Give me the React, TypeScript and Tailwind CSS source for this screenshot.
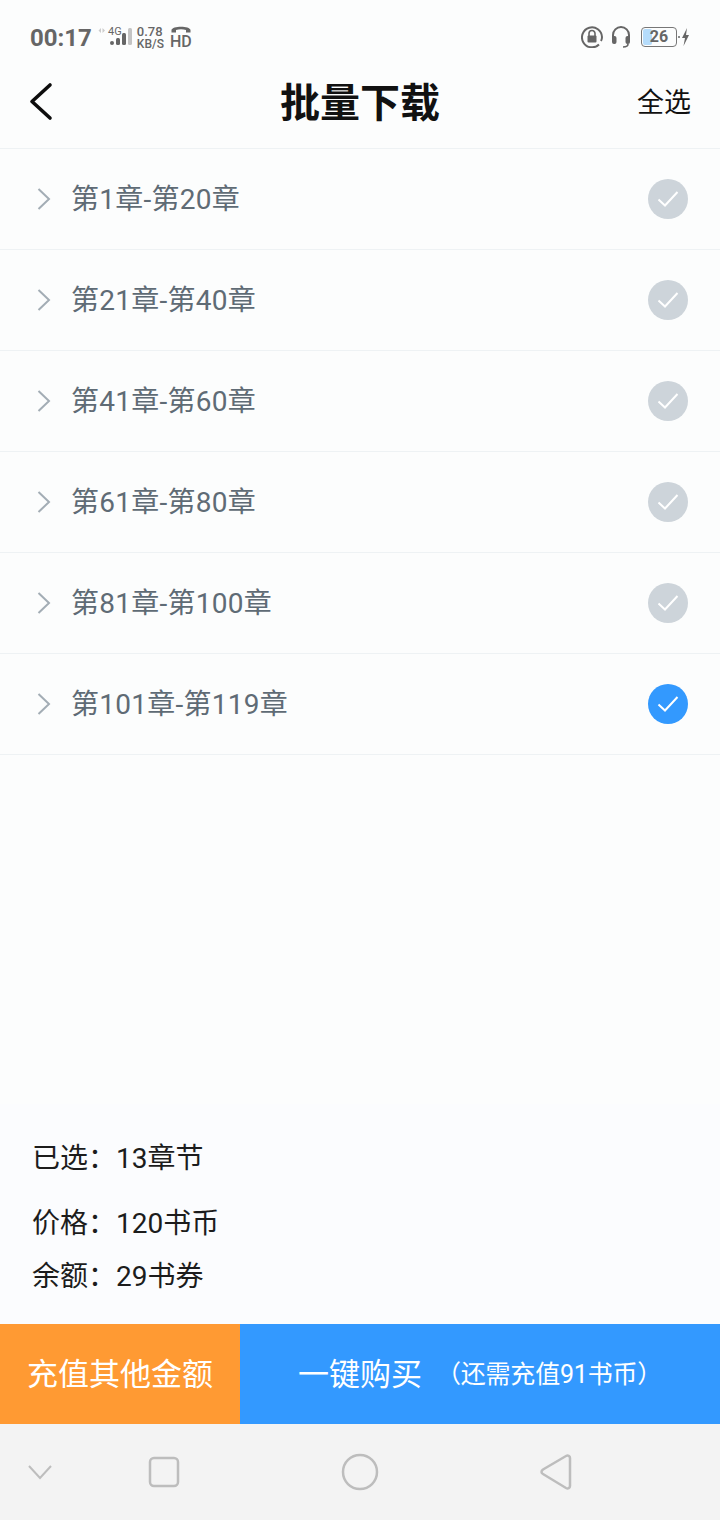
const FONT = "font-['Roboto','Noto_Sans_CJK_SC',sans-serif]"

const chapters = [
  { label: "第1章-第20章", on: false },
  { label: "第21章-第40章", on: false },
  { label: "第41章-第60章", on: false },
  { label: "第61章-第80章", on: false },
  { label: "第81章-第100章", on: false },
  { label: "第101章-第119章", on: true },
]

function StatusBar() {
  return (
    <div className="h-[70px] flex items-start justify-between pt-[23px] pl-[30px] pr-[30px] text-[#666666]">
      <div className="flex items-center h-[30px]">
        <span className="text-[24px] leading-[30px] font-bold">00:17</span>
        <svg width="44" height="26" viewBox="0 0 44 26" className="ml-[5px]">
          <path d="M4 3L1.500 5.500L4 8zM5.500 3L8 5.500L5.500 8z" fill="#cccccc" />
          <text x="11" y="10" fontSize="11" fill="#666" fontFamily="Roboto">4G</text>
          <circle cx="15" cy="18" r="2" fill="#666" />
          <rect x="19" y="13" width="4" height="7" rx="1.500" fill="#666" />
          <rect x="25" y="8" width="4" height="12" rx="1.500" fill="#666" />
          <rect x="31" y="3" width="4" height="17" rx="1.500" fill="#c4c4c4" />
        </svg>
        <div className="flex flex-col items-start ml-[-4px] text-[13px] leading-[13px] font-medium">
          <span>0.78</span>
          <span className="text-[12px]">KB/S</span>
        </div>
        <div className="flex flex-col items-center ml-[6px] mt-[-2px]">
          <svg width="20" height="8" viewBox="0 0 20 8">
            <path d="M0.500 7.500V5C1 0.500 19 0.500 19.500 5V7.500H15V5Q10 3.500 5 5V7.500z" fill="#666" />
          </svg>
          <span className="text-[16px] leading-[14px] font-medium mt-[2px]">HD</span>
        </div>
      </div>
      <div className="flex items-center h-[30px] mt-[-1px]">
        <svg width="22" height="22" viewBox="0 0 22 22" fill="none">
          <path d="M18 18.500A10 10 0 1 1 21 11c0 1.500-.3 2.800-1 4" stroke="#666" strokeWidth="2" />
          <rect x="6.500" y="9.500" width="9" height="7" rx="1" fill="#666" />
          <path d="M8 10V7.500a3 3 0 0 1 6 0V10" stroke="#666" strokeWidth="1.600" />
        </svg>
        <svg width="20" height="22" viewBox="0 0 20 22" fill="none" className="ml-[8px]">
          <path d="M2 13V9a8 8 0 0 1 16 0v4" stroke="#666" strokeWidth="2" />
          <rect x="1" y="10" width="4.500" height="8" rx="2" fill="#666" />
          <rect x="14.500" y="10" width="4.500" height="8" rx="2" fill="#666" />
          <path d="M17 18c0 2-2 3-5 3" stroke="#666" strokeWidth="1.600" />
        </svg>
        <div className="relative ml-[10px] w-[36px] h-[20px] border border-[#777777] rounded-[4px] overflow-hidden flex items-center justify-center">
          <div className="absolute left-[1px] top-[1px] bottom-[1px] w-[9px] bg-[#b5dcfb] rounded-[2px]" />
          <span className="relative text-[16px] leading-[18px] font-bold">26</span>
        </div>
        <svg width="12" height="20" viewBox="0 0 12 20" className="ml-[1px]">
          <circle cx="1" cy="10" r="1" fill="#666" />
          <path d="M9 1L4 11h3l-1.500 8L11 8H8z" fill="#666" />
        </svg>
      </div>
    </div>
  )
}

function Check({ on }: { on: boolean }) {
  return (
    <div className={`w-10 h-10 rounded-full flex items-center justify-center ${on ? "bg-[#3399fe]" : "bg-[#cdd4da]"}`}>
      <svg width="24" height="20" viewBox="0 0 24 20" fill="none">
        <path d="M2.500 10.500L9 16.500L21.500 3" stroke="white" strokeWidth="2" />
      </svg>
    </div>
  )
}

export default function App() {
  return (
    <div className={`w-[720px] h-[1520px] flex flex-col bg-[#fcfdfd] ${FONT}`}>
      <StatusBar />
      <div className="h-[79px] relative flex items-center justify-center border-b border-[#eef2f4]">
        <svg width="28" height="40" viewBox="0 0 28 40" fill="none" className="absolute left-[28px] top-[12px]">
          <path d="M22 3L4 19.500L22 36" stroke="#0d0d0d" strokeWidth="3.600" strokeLinecap="round" strokeLinejoin="round" />
        </svg>
        <h1 className="text-[40px] leading-[50px] font-bold text-[#111111] mt-[-10px]">批量下载</h1>
        <span className="absolute right-[29px] top-[15px] text-[27px] leading-[36px] text-[#111111]">全选</span>
      </div>
      <div className="flex flex-col">
        {chapters.map(item => (
          <div key={item.label} className="h-[101px] flex items-center pl-[36px] pr-[32px] border-b border-[#eef2f4]">
            <svg width="16" height="24" viewBox="0 0 16 24" fill="none" className="shrink-0">
              <path d="M2.500 2L13 12L2.500 22" stroke="#a3adb5" strokeWidth="2" />
            </svg>
            <span className="ml-[19px] flex-1 text-[28px] tracking-[0.25px] leading-[36px] text-[#5f6b75] mt-[1px]">{item.label}</span>
            <Check on={item.on} />
          </div>
        ))}
      </div>
      <div className="flex-1" />
      <div className="h-[220px] bg-[#fbfcfe] pl-[32px] pt-[37px] text-[28px] text-[#1c1c1c]">
        <div className="leading-[36px]">已选：13章节</div>
        <div className="leading-[36px] mt-[29px]">价格：120书币</div>
        <div className="leading-[36px] mt-[17px]">余额：29书券</div>
      </div>
      <div className="h-[100px] flex text-white">
        <div className="w-[240px] bg-[#ff9a33] flex items-center justify-center pt-[2px] text-[31px]">充值其他金额</div>
        <div className="flex-1 bg-[#3399ff] flex items-center justify-center pt-[2px]">
          <span className="text-[31px]">一键购买</span>
          <span className="ml-[14px] text-[25px] tracking-[-0.2px]">（还需充值91书币）</span>
        </div>
      </div>
      <div className="h-[96px] bg-[#f3f3f3] relative flex items-center">
        <svg width="26" height="20" viewBox="0 0 26 20" fill="none" className="ml-[27px]">
          <path d="M2 4L13 16L24 4" stroke="#bdbdbd" strokeWidth="2" />
        </svg>
        <svg width="32" height="32" viewBox="0 0 32 32" fill="none" className="ml-[95px]">
          <rect x="2" y="2" width="28" height="28" rx="4" stroke="#bdbdbd" strokeWidth="2.500" />
        </svg>
        <svg width="38" height="38" viewBox="0 0 38 38" fill="none" className="ml-[161px]">
          <circle cx="19" cy="19" r="17" stroke="#bdbdbd" strokeWidth="2.500" />
        </svg>
        <svg width="32" height="38" viewBox="0 0 32 38" fill="none" className="ml-[161px]">
          <path d="M3 16.500L26 3C28 2 30 3 30 5V33C30 35 28 36 26 35L3 21C1 20 1 18 3 16.500Z" stroke="#bdbdbd" strokeWidth="2.500" />
        </svg>
      </div>
    </div>
  )
}
